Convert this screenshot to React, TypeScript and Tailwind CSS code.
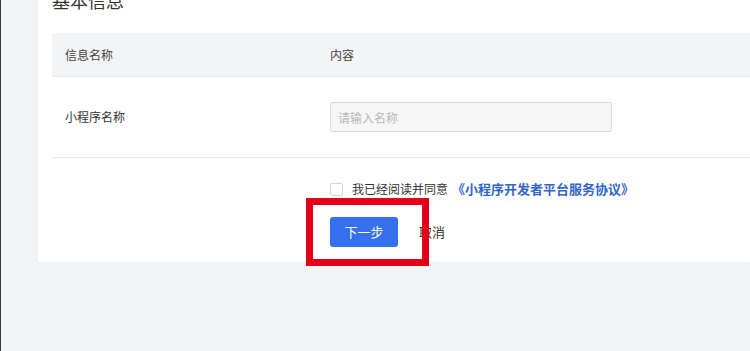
import React from "react";

export default function App() {
  return (
    <div
      className="relative w-[750px] h-[351px] overflow-hidden bg-[#f2f3f5] border-l border-[#3a3a3a] flex"
      style={{ fontFamily: '"Noto Sans CJK SC", "Noto Sans", sans-serif' }}
    >
      <div className="ml-[37px] flex-1 self-start -mt-[16px] bg-white pl-[14px] pt-[4px] pb-[15px] shadow-[-1px_0_3px_rgba(0,0,0,0.04)]">
        <div className="text-[18px] leading-[24px] text-[#333]">基本信息</div>
        <div className="mt-[21px] h-[44px] bg-[#f3f4f6] border-b border-[#e8e8e8] flex items-center text-[12px] text-[#444]">
          <div className="w-[278px] pl-[13px]">信息名称</div>
          <div>内容</div>
        </div>
        <div className="h-[81px] border-b border-[#e6e6e6] flex items-center text-[12px] text-[#333]">
          <div className="w-[278px] pl-[13px]">小程序名称</div>
          <input
            className="w-[282px] h-[30px] bg-[#f6f6f6] border border-[#d9d9d9] rounded-[2px] px-[7px] text-[12px] outline-none placeholder:text-[#b8b8b8]"
            placeholder="请输入名称"
          />
        </div>
        <div className="pl-[278px]">
          <div className="mt-[21px] h-[20px] flex items-center text-[12px] text-[#333]">
            <span className="w-[13px] h-[13px] border border-[#d4d4d4] rounded-[2px] bg-white" />
            <span className="ml-[9px]">我已经阅读并同意</span>
            <span className="ml-[4px] text-[13px] font-bold text-[#2f66c8]">《小程序开发者平台服务协议》</span>
          </div>
          <div className="mt-[18px] flex items-center">
            <button className="w-[68px] h-[30px] bg-[#3571ee] rounded-[3px] text-white text-[13px]">下一步</button>
            <span className="ml-[21px] text-[13px] text-[#333]">取消</span>
          </div>
        </div>
      </div>
      <div className="absolute left-[305px] top-[198px] w-[123px] h-[68px] border-[7px] border-[#e2001a]" />
    </div>
  );
}
